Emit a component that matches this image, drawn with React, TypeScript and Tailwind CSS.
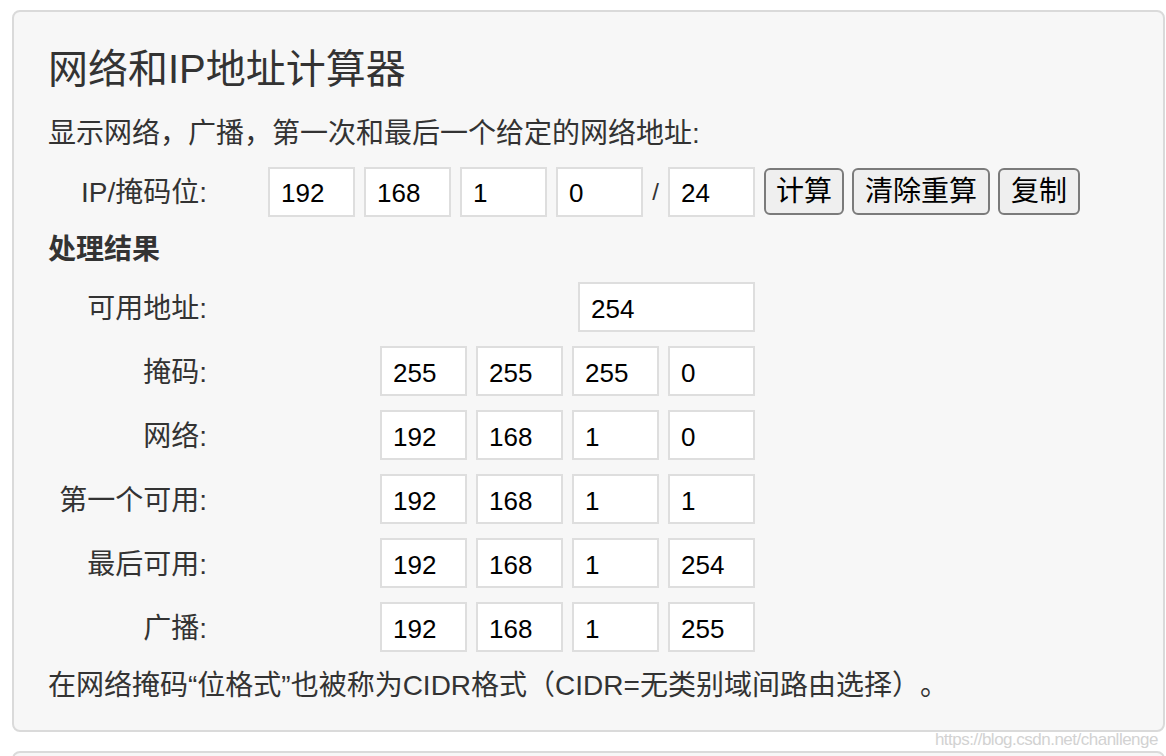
import React from 'react';

const font = { fontFamily: '"Liberation Sans", "Noto Sans CJK SC", sans-serif' };

const Box = ({ value, wide }: { value: string; wide?: boolean }) => (
    <input
        type="text"
        readOnly
        value={value}
        className={`${wide ? 'w-[177px]' : 'w-[87px]'} h-[50px] bg-white border-2 border-[#dedede] pl-[11px] pt-[4px] text-[26px] text-black outline-none`}
        style={font}
    />
);

const Btn = ({ children, w }: { children: React.ReactNode; w: string }) => (
    <button type="button" className={`${w} h-[47px] bg-[#efefef] border-2 border-[#7b7b7b] rounded-[6px] text-[28px] text-black leading-none`}>
        {children}
    </button>
);

const rows: { label: string; values: string[] }[] = [
    { label: '掩码:', values: ['255', '255', '255', '0'] },
    { label: '网络:', values: ['192', '168', '1', '0'] },
    { label: '第一个可用:', values: ['192', '168', '1', '1'] },
    { label: '最后可用:', values: ['192', '168', '1', '254'] },
    { label: '广播:', values: ['192', '168', '1', '255'] },
];

const App = () => {
    return (
        <div className="relative w-[1166px] h-[756px] bg-white overflow-hidden text-[#333] [text-spacing-trim:space-all]" style={font}>
            <div className="ml-[12px] mt-[10px] w-[1153px] h-[722px] bg-[#f7f7f7] border-2 border-[#dadada] rounded-[8px] pl-[34px] pt-[33px]">
                <h1 className="text-[40px] leading-[48px] font-normal">网络和IP地址计算器</h1>
                <p className="mt-[21px] text-[28px] leading-[40px]">显示网络，广播，第一次和最后一个给定的网络地址:</p>

                {/* IP / mask input row */}
                <div className="mt-[12px] flex items-center h-[51px]">
                    <span className="w-[159px] pt-[3px] text-right text-[28px] leading-[40px]">IP/掩码位:</span>
                    <div className="ml-[61px] flex items-center gap-[9px]">
                        <Box value="192" />
                        <Box value="168" />
                        <Box value="1" />
                        <Box value="0" />
                    </div>
                    <span className="w-[25px] text-center text-[24px] text-[#333]">/</span>
                    <Box value="24" />
                    <div className="ml-[9px] flex items-center gap-[8px]">
                        <Btn w="w-[80px]">计算</Btn>
                        <Btn w="w-[138px]">清除重算</Btn>
                        <Btn w="w-[82px]">复制</Btn>
                    </div>
                </div>

                <h2 className="mt-[13px] text-[28px] leading-[40px] font-bold">处理结果</h2>

                <div className="mt-[12px] flex items-center">
                    <span className="w-[159px] pt-[3px] text-right text-[28px] leading-[40px]">可用地址:</span>
                    <div className="ml-[371px]">
                        <Box value="254" wide />
                    </div>
                </div>

                <div className="mt-[14px] flex flex-col gap-[14px]">
                    {rows.map((row) => (
                        <div key={row.label} className="flex items-center">
                            <span className="w-[159px] pt-[3px] text-right text-[28px] leading-[40px]">{row.label}</span>
                            <div className="ml-[173px] flex items-center gap-[9px]">
                                {row.values.map((v, i) => (
                                    <Box key={i} value={v} />
                                ))}
                            </div>
                        </div>
                    ))}
                </div>

                <p className="mt-[14px] text-[28px] leading-[40px]">在网络掩码“位格式”也被称为CIDR格式（CIDR=无类别域间路由选择）。</p>
            </div>

            <div className="ml-[12px] mt-[19px] w-[1153px] h-[60px] bg-[#f7f7f7] border-2 border-[#dadada] rounded-[8px]" />

            <span
                className="absolute right-[8px] top-[729px] text-[17px] leading-[22px] text-[#d2d2d2] tracking-[-0.5px]"
                style={{ fontFamily: '"Liberation Sans", sans-serif' }}
            >
                https://blog.csdn.net/chanllenge
            </span>
        </div>
    );
};

export default App;
